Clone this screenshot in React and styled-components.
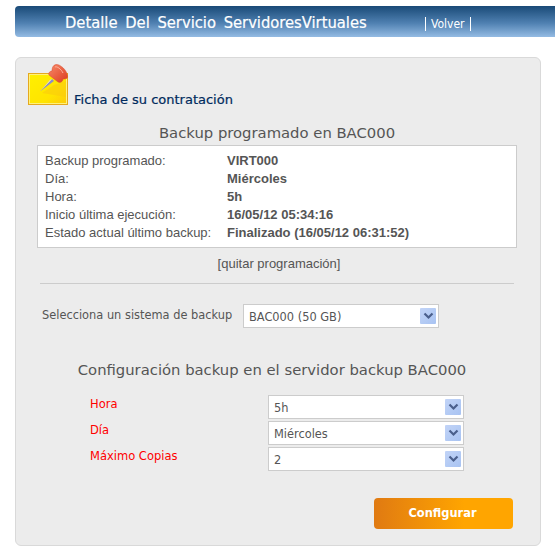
import React from "react";
import styled, { createGlobalStyle } from "styled-components";

const Global = createGlobalStyle`
  html, body { margin: 0; padding: 0; background: #fff; }
  body { font-family: "DejaVu Sans", Verdana, sans-serif; color: #555; }
`;

const Page = styled.div`
  width: 555px;
  height: 560px;
  overflow: hidden;
  padding-top: 6px;
  box-sizing: border-box;
`;

const Header = styled.header`
  margin-left: 15px;
  height: 31px;
  box-sizing: border-box;
  padding: 2px 0 0 50px;
  display: flex;
  align-items: center;
  border-radius: 4px 0 0 4px;
  background: linear-gradient(#194a77, #4f80b1 55%, #94bbe3);
`;

const Title = styled.h1`
  margin: 0;
  width: 360px;
  font: 400 16.4px "DejaVu Sans Condensed", "DejaVu Sans", sans-serif;
  -webkit-text-stroke: 0.2px #fff;
  word-spacing: 3px;
  color: #fff;
  white-space: nowrap;
`;

const BackLink = styled.a`
  font: 400 12px "DejaVu Sans Condensed", "DejaVu Sans", sans-serif;
  color: #fff;
  border-left: 1px solid #fff;
  border-right: 1px solid #fff;
  padding: 0 5px;
  line-height: 14px;
  margin-top: 2px;
`;

const Panel = styled.main`
  margin: 20px 0 0 15px;
  width: 526px;
  height: 489px;
  box-sizing: border-box;
  background: #ececec;
  border: 1px solid #d9d9d9;
  border-radius: 6px;
  padding: 6px 0 0 12px;
`;

const CardHead = styled.div`
  display: flex;
  align-items: flex-end;
  gap: 5px;
`;

const CardTitle = styled.span`
  font: 400 13px "DejaVu Sans", sans-serif;
  -webkit-text-stroke: 0.2px #002a5c;
  color: #002a5c;
  margin-bottom: -1px;
`;

const Heading = styled.h2`
  margin: ${(p) => p.$top}px 0 0 0;
  width: ${(p) => p.$width}px;
  text-align: center;
  font: 400 14.8px/18px "DejaVu Sans", sans-serif;
  color: #555;
  white-space: nowrap;
`;

const InfoBox = styled.dl`
  margin: 3px 0 0 9px;
  width: 480px;
  height: 103px;
  box-sizing: border-box;
  background: #fff;
  border: 1px solid #ccc;
  padding: 5px 0 0 7px;
  display: grid;
  grid-template-columns: 182px 1fr;
  grid-auto-rows: 18px;
  align-items: center;
  font: 13px "Liberation Sans", Arial, sans-serif;
  color: #555;
`;

const Term = styled.dt`
  margin: 0;
`;

const Value = styled.dd`
  margin: 0;
  font-weight: 700;
`;

const RemoveLink = styled.a`
  display: block;
  margin: 9px 0 0 0;
  width: 502px;
  text-align: center;
  font: 13px/14px "Liberation Sans", Arial, sans-serif;
  color: #555;
`;

const Divider = styled.hr`
  margin: 12px 0 0 12px;
  width: 474px;
  border: 0;
  border-top: 1px solid #ccc;
`;

const SystemRow = styled.div`
  display: flex;
  align-items: center;
  margin: 20px 0 0 14px;
`;

const FieldCaption = styled.span`
  width: 201px;
  font: 11.4px "DejaVu Sans", sans-serif;
  color: #555;
  margin-top: -2px;
`;

const SelectBox = styled.div`
  width: 196px;
  height: 24px;
  box-sizing: border-box;
  background: #fff;
  border: 1px solid #ccc;
  display: flex;
  align-items: center;
  justify-content: space-between;
  padding: 2px 2px 0 5px;
  font: 11.4px "DejaVu Sans", sans-serif;
  color: #555;
`;

const Arrow = styled.span`
  width: 16px;
  height: 16px;
  margin-top: -2px;
  display: flex;
  align-items: center;
  justify-content: center;
  border-radius: 1px;
  background: linear-gradient(135deg, #c2d4f7, #a8c3f2);
`;

const ConfigGrid = styled.div`
  display: grid;
  grid-template-columns: 178px 196px;
  grid-auto-rows: 24px;
  row-gap: 2px;
  margin: 16px 0 0 62px;
`;

const RedLabel = styled.label`
  font: 11.5px/18px "DejaVu Sans", sans-serif;
  color: #f00;
`;

const Actions = styled.div`
  display: flex;
  justify-content: flex-end;
  width: 485px;
  margin-top: 27px;
`;

const Button = styled.button`
  width: 139px;
  height: 31px;
  border: 0;
  border-radius: 4px;
  background: linear-gradient(90deg, #e07a12, #ffa500 65%);
  color: #fff;
  font: 700 12.7px "DejaVu Sans Condensed", "DejaVu Sans", sans-serif;
  padding: 0 2px 2px 0;
`;

const Chevron = () => (
  <svg width="11" height="8" viewBox="0 0 11 8">
    <path d="M1.5 1.5 5.5 5.5 9.5 1.5" fill="none" stroke="#4a5f8c" strokeWidth="2.2" />
  </svg>
);

const Select = ({ children }) => (
  <SelectBox>
    {children}
    <Arrow>
      <Chevron />
    </Arrow>
  </SelectBox>
);

const PinIcon = () => (
  <svg width="41" height="42" viewBox="0 0 41 42">
    <defs>
      <linearGradient id="note" x1="0" y1="0" x2="1" y2="1">
        <stop offset="0" stopColor="#fff000" />
        <stop offset="0.65" stopColor="#ffe400" />
        <stop offset="1" stopColor="#fdc80c" />
      </linearGradient>
      <linearGradient id="pin" x1="0" y1="0" x2="1" y2="1">
        <stop offset="0" stopColor="#f88a68" />
        <stop offset="1" stopColor="#dc3a20" />
      </linearGradient>
    </defs>
    <rect x="0.5" y="9.5" width="39" height="31" fill="url(#note)" stroke="#e5a91e" />
    <rect x="1.5" y="10.5" width="37" height="29" fill="none" stroke="#fff27a" />
    <path d="M14 29 26 21 38 17V33Z" fill="#f9c80e" opacity="0.55" />
    <path d="M12 27.5 24 15 26 17Z" fill="#8c8ccc" />
    <path d="M12 27.5 22 16 24 15Z" fill="#e4e4f0" />
    <path d="M28 0.5C32 0 39 6 39.5 12 40 15 37 15 35 15 35 18 32 19 30 18L21 11C20 9 22 7 24 7 24 4 25 1 28 0.5Z" fill="url(#pin)" stroke="#d84a2c" strokeWidth="0.5" />
    <path d="M27 3C29 2 33 5 35 9" fill="none" stroke="#fbb09a" strokeWidth="1" />
  </svg>
);

export default function App() {
  return (
    <Page>
      <Global />
      <Header>
        <Title>Detalle Del Servicio ServidoresVirtuales</Title>
        <BackLink>Volver</BackLink>
      </Header>
      <Panel>
        <CardHead>
          <PinIcon />
          <CardTitle>Ficha de su contratación</CardTitle>
        </CardHead>
        <Heading $top={18} $width={498}>Backup programado en BAC000</Heading>
        <InfoBox>
          <Term>Backup programado:</Term><Value>VIRT000</Value>
          <Term>Día:</Term><Value>Miércoles</Value>
          <Term>Hora:</Term><Value>5h</Value>
          <Term>Inicio última ejecución:</Term><Value>16/05/12 05:34:16</Value>
          <Term>Estado actual último backup:</Term><Value>Finalizado (16/05/12 06:31:52)</Value>
        </InfoBox>
        <RemoveLink>[quitar programación]</RemoveLink>
        <Divider />
        <SystemRow>
          <FieldCaption>Selecciona un sistema de backup</FieldCaption>
          <Select>BAC000 (50 GB)</Select>
        </SystemRow>
        <Heading $top={33} $width={488}>Configuración backup en el servidor backup BAC000</Heading>
        <ConfigGrid>
          <RedLabel>Hora</RedLabel>
          <Select>5h</Select>
          <RedLabel>Día</RedLabel>
          <Select>Miércoles</Select>
          <RedLabel>Máximo Copias</RedLabel>
          <Select>2</Select>
        </ConfigGrid>
        <Actions>
          <Button>Configurar</Button>
        </Actions>
      </Panel>
    </Page>
  );
}
